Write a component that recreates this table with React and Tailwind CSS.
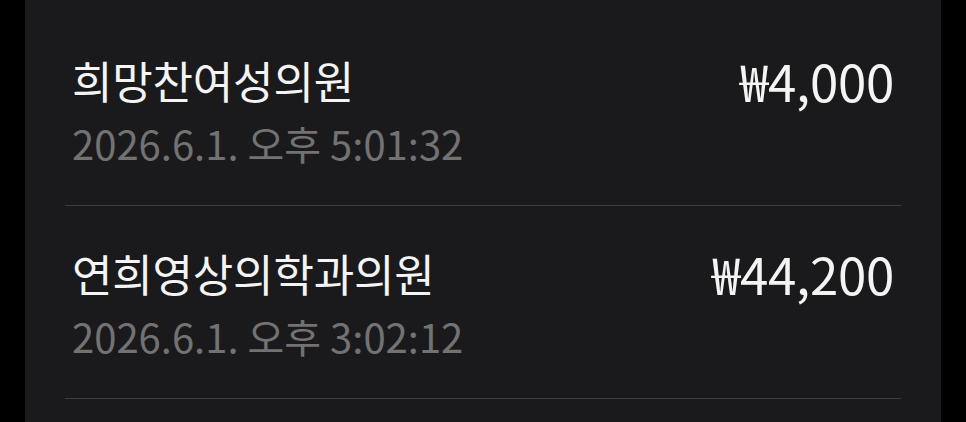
import React from 'react';

const items = [
  { name: '희망찬여성의원', time: '2026.6.1. 오후 5:01:32', amount: '₩4,000' },
  { name: '연희영상의학과의원', time: '2026.6.1. 오후 3:02:12', amount: '₩44,200' },
];

export default function App() {
  return (
    <div className="min-h-screen bg-black flex justify-center" style={{ fontFamily: '"Noto Sans CJK KR", "Noto Sans", sans-serif' }}>
      <div className="w-[916px] h-[422px] bg-[#1a1a1c] px-[40px] pt-[13px] overflow-hidden">
        {items.map((item) => (
          <div key={item.name} className="border-b border-[#3d3d3f] pl-[7px] pr-[7px] pt-[39px] pb-[38px] flex justify-between">
            <div>
              <div className="text-[44px] leading-[56px] text-[#f4f4f4] tracking-[-0.2px]">{item.name}</div>
              <div className="mt-[11px] text-[40px] leading-[48px] text-[#727272]">{item.time}</div>
            </div>
            <div className="text-[51px] leading-[56px] text-[#f4f4f4] tracking-[-0.3px]">{item.amount}</div>
          </div>
        ))}
      </div>
    </div>
  );
}
